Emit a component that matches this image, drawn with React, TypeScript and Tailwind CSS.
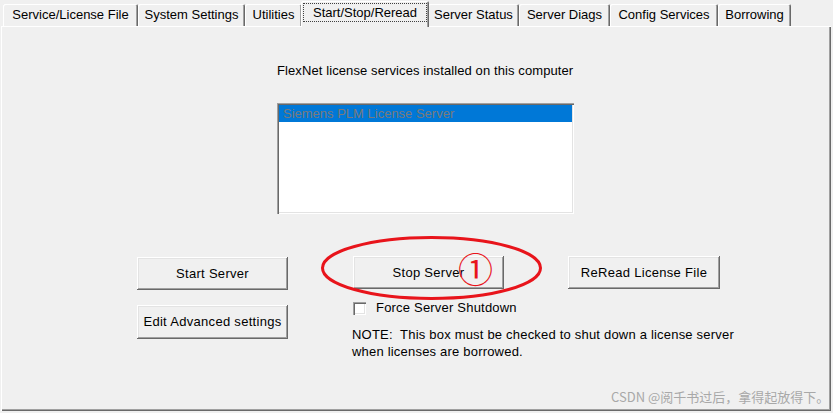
const tabs = [
  { label: 'Service/License File', w: 'w-[135px]' },
  { label: 'System Settings', w: 'w-[107px]' },
  { label: 'Utilities', w: 'w-[57px]' },
  { label: 'Start/Stop/Reread', w: 'w-[128px]', active: true },
  { label: 'Server Status', w: 'w-[91px]' },
  { label: 'Server Diags', w: 'w-[91px]' },
  { label: 'Config Services', w: 'w-[108px]' },
  { label: 'Borrowing', w: 'w-[73px]' },
]

const raised =
  'shadow-[inset_-1px_-1px_#696969,inset_1px_1px_#ffffff,inset_-2px_-2px_#a0a0a0,inset_2px_2px_#e3e3e3]'

const sunken =
  'shadow-[inset_1px_1px_#a0a0a0,inset_2px_2px_#696969,inset_-1px_-1px_#ffffff,inset_-2px_-2px_#e3e3e3]'

function WinButton({ label, className }: { label: string; className: string }) {
  return (
    <button
      className={`flex items-center justify-center bg-[#f0f0f0] text-[13px] tracking-[0.3px] text-black ${raised} ${className}`}
    >
      {label}
    </button>
  )
}

function Tab({ label, w, active }: { label: string; w: string; active?: boolean }) {
  if (active) {
    return (
      <div
        className={`relative z-10 -mx-[1px] -mb-[1px] flex h-[26px] ${w} shrink-0 items-start justify-center rounded-t-[2px] bg-[#f0f0f0] px-[2px] pt-[2px] shadow-[inset_1px_1px_#ffffff,inset_-1px_0_#696969,inset_-2px_0_#a0a0a0]`}
      >
        <div className="flex h-[19px] w-full items-center justify-center border border-dotted border-[#404040] text-[13px] leading-none">
          {label}
        </div>
      </div>
    )
  }
  return (
    <div
      className={`flex h-[22px] ${w} shrink-0 items-center justify-center rounded-t-[2px] bg-[#f0f0f0] text-[13px] shadow-[inset_1px_1px_#ffffff,inset_-1px_0_#696969,inset_-2px_0_#a0a0a0]`}
    >
      {label}
    </div>
  )
}

export default function App() {
  return (
    <div className="relative h-[413px] w-[833px] overflow-hidden bg-[#f0f0f0] font-['Liberation_Sans',sans-serif] text-black">
      <div className="flex h-[26px] items-end pl-[3px]">
        {tabs.map((t) => (
          <Tab key={t.label} label={t.label} w={t.w} active={t.active} />
        ))}
      </div>

      <div className="ml-[1px] flex h-[385px] w-[830px] flex-col pt-[37px] shadow-[inset_1px_1px_#ffffff,inset_-1px_-1px_#696969,inset_-2px_-2px_#a0a0a0]">
        <div className="pl-[276px] text-[13px] leading-[16px] tracking-[0.1px]">
          FlexNet license services installed on this computer
        </div>

        <div className={`ml-[276px] mt-[24px] h-[111px] w-[297px] bg-white p-[2px] ${sunken}`}>
          <div className="flex h-[17px] items-center bg-[#0078d7] pl-[4px] text-[13px] text-[#7a7a7a]">
            Siemens PLM License Server
          </div>
        </div>

        <div className="mt-[42px] flex items-start pl-[136px]">
          <div className="flex w-[151px] shrink-0 flex-col gap-[15px] pt-[1px]">
            <WinButton label="Start Server" className="h-[33px] w-[151px]" />
            <WinButton label="Edit Advanced settings" className="h-[34px] w-[151px]" />
          </div>

          <div className="ml-[65px] flex w-[151px] shrink-0 flex-col">
            <WinButton label="Stop Server" className="h-[33px] w-[151px]" />
            <div className="mt-[11px] flex items-center gap-[10px]">
              <div className={`h-[13px] w-[13px] shrink-0 bg-white ${sunken}`} />
              <span className="whitespace-nowrap text-[13px] leading-[16px] tracking-[0.2px]">Force Server Shutdown</span>
            </div>
            <div className="-ml-[1px] mt-[10px] whitespace-nowrap text-[13px] leading-[17px] tracking-[0.2px]">
              <div>NOTE:&nbsp; This box must be checked to shut down a license server</div>
              <div>when licenses are borrowed.</div>
            </div>
          </div>

          <div className="ml-[64px] shrink-0">
            <WinButton label="ReRead License File" className="h-[33px] w-[152px]" />
          </div>
        </div>
      </div>

      {/* red annotation */}
      <svg className="pointer-events-none absolute left-0 top-0" width="833" height="413">
        <ellipse cx="431.5" cy="268" rx="109" ry="30.5" fill="none" stroke="#e8141b" strokeWidth="3" />
      </svg>
      <div className="pointer-events-none absolute left-[458px] top-[249px] font-['Noto_Sans_CJK_SC',sans-serif] text-[35px] leading-[38px] text-[#e8141b]">
        ①
      </div>

      <div className="pointer-events-none absolute left-[611px] top-[388px] whitespace-nowrap font-['Noto_Sans_CJK_SC',sans-serif] text-[13px] leading-[18px] text-[#a8a8a8]">
        CSDN @阅千书过后，拿得起放得下。
      </div>
    </div>
  )
}
